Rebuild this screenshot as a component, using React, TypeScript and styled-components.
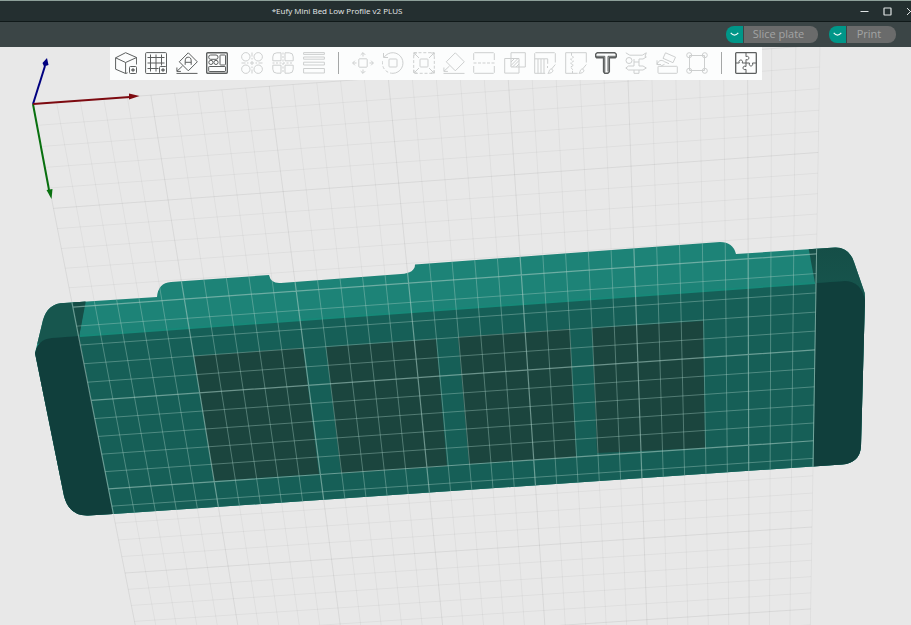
import React from "react";
import styled, { createGlobalStyle } from "styled-components";

const GlobalStyle = createGlobalStyle`
  * { box-sizing: border-box; }
  body { margin: 0; background: #e8e8e8; font-family: "Open Sans", "Noto Sans", sans-serif; }
`;

const Page = styled.div`
  display: flex;
  flex-direction: column;
  height: 100vh;
  overflow: hidden;
`;

const TitleBar = styled.header`
  display: flex;
  align-items: center;
  justify-content: space-between;
  flex: none;
  height: 22px;
  background: #242f30;
  border-top: 1px solid #8da099;
  border-bottom: 1px solid #101919;
  overflow: hidden;
`;

const Title = styled.h1`
  flex: 0 0 74%;
  margin: 0;
  color: #e6eaea;
  font: 400 8px/20px "Open Sans", sans-serif;
  text-align: center;
  white-space: nowrap;
`;

const WindowButtons = styled.div`
  display: flex;
  margin-right: -11px;
`;

const WindowButton = styled.button`
  display: grid;
  place-items: center;
  width: 23px;
  height: 20px;
  padding: 0;
  border: 0;
  background: none;
  color: #dfe4e4;
`;

const ActionBar = styled.div`
  display: flex;
  align-items: center;
  justify-content: flex-end;
  gap: 11px;
  flex: none;
  height: 25px;
  padding-right: 15px;
  background: #3b4546;
`;

const SplitButton = styled.div`
  display: flex;
  gap: 1px;
  height: 17px;
`;

const Caret = styled.button`
  display: grid;
  place-items: center;
  width: 17px;
  padding: 0;
  border: 0;
  border-radius: 8px 0 0 8px;
  background: #009688;
  color: #eefaf8;
`;

const Action = styled.button<{ $width: number }>`
  width: ${(p) => p.$width}px;
  padding: 0 5px 1px 0;
  border: 0;
  border-radius: 0 8px 8px 0;
  background: #6a6b6b;
  color: #a3a4a4;
  font: 400 11px/16px "Open Sans", sans-serif;
  text-align: center;
`;

const Viewport = styled.main`
  display: grid;
  grid-template: minmax(0, 1fr) / minmax(0, 1fr);
  flex: 1;
  min-height: 0;
  background: #e8e8e8;
`;

const Scene = styled.svg`
  grid-area: 1 / 1;
  width: 100%;
  height: 100%;
  display: block;
`;

const Toolbar = styled.nav`
  grid-area: 1 / 1;
  z-index: 1;
  align-self: start;
  justify-self: start;
  display: flex;
  align-items: center;
  gap: 13px;
  margin-left: 110px;
  padding: 5px 5px 6px;
  background: #fcfdfd;
`;

const ToolGroup = styled.div<{ $width: number }>`
  display: flex;
  justify-content: space-between;
  width: ${(p) => p.$width}px;
`;

const Tool = styled.button`
  width: 22px;
  height: 22px;
  padding: 0;
  border: 0;
  background: none;
  color: #5c5f5f;
  &:disabled { color: #cdcfcf; }
  svg { display: block; }
`;

const Divider = styled.span`
  width: 1px;
  height: 22px;
  background: #a5a7a7;
`;

/* ---------- toolbar icons, 22 x 22 ---------- */

const PlusBox = () => (
  <>
    <rect x="14.5" y="14.5" width="7" height="7" rx="1" fill="#fcfdfd" />
    <path d="M18 16.2v3.6M16.2 18h3.6" strokeWidth="1.3" />
  </>
);
const Brush = () => (
  <path d="M21.3 12.5L17.6 17M18.4 17.6c1.4 1.6-.6 3.9-4.6 3.7 1.6-.8 1-2.3 2-3.5.8-.9 1.9-.9 2.6-.2z" />
);

const icons: Record<string, React.ReactNode> = {
  "Add model": (
    <>
      <path d="M.6 5.8L10.6.7l11 4.8v7M.6 5.8v11.4l10 4.3V10.5L.6 5.8M10.6 10.5l11-5M10.6 21.5l2-.7" />
      <PlusBox />
    </>
  ),
  "Add plate": (
    <>
      <rect x=".6" y=".6" width="20.9" height="20.9" rx="1" />
      <path d="M5.5 2.5v17M11 2.5v17M16.5 2.5v11M2.5 5.5h17M2.5 11h17M2.5 16.5h11" />
      <PlusBox />
    </>
  ),
  "Auto orient": (
    <>
      <path d="M12.3.8l9 9-9 9-9-9z" />
      <path d="M9.2 12.8V9c0-2.8 1.2-3.8 3-3.8s3 1 3 3.8v3.8M9.2 10.3h6" />
      <path d="M6.5 14L.9 19.3M.9 15.5v3.9h4M.5 21.4h21" />
    </>
  ),
  Arrange: (
    <>
      <rect x=".7" y=".7" width="20.6" height="20.6" rx="1" strokeWidth="1.4" />
      <rect x="2.7" y="3" width="9.3" height="4.3" rx="2" />
      <rect x="14" y="3" width="5.5" height="10" rx=".6" />
      <circle cx="4.9" cy="10.4" r="2.1" />
      <circle cx="10" cy="10.4" r="2.1" />
      <rect x="2.7" y="14.5" width="16.8" height="5" rx=".6" />
    </>
  ),
  "Split to objects": (
    <>
      <circle cx="4.8" cy="4.8" r="4.2" />
      <circle cx="17.2" cy="4.8" r="4.2" />
      <circle cx="4.8" cy="17.2" r="4.2" />
      <circle cx="17.2" cy="17.2" r="4.2" />
      <path d="M11 .5v21M.5 11h21" strokeDasharray="4 1.5 1.5 1.5" />
    </>
  ),
  "Split to parts": (
    <>
      <path d="M9 8.800V.8H4.800a4 4 0 00-4 4v4zM13 8.800V.8h4.200a4 4 0 014 4v4zM9 13.200v8H4.800a4 4 0 01-4-4v-4zM13 13.200v8h4.200a4 4 0 004-4v-4z" />
      <path d="M11 .5v21M.5 11h21" strokeDasharray="2 1.5" />
    </>
  ),
  "Layer height": (
    <>
      <rect x=".6" y=".6" width="20.8" height="1.8" />
      <rect x=".6" y="5" width="20.8" height="2.2" />
      <rect x=".6" y="10.2" width="20.8" height="2.8" />
      <rect x=".6" y="16.5" width="20.8" height="4.5" />
    </>
  ),
  Move: (
    <>
      <rect x="6.8" y="6.8" width="8.4" height="8.4" rx=".8" />
      <path d="M11 4.5V.8M8.7 2.9L11 .6l2.3 2.3M11 17.5v3.7M8.7 19.1l2.3 2.3 2.3-2.3M4.5 11H.8M2.9 8.7L.6 11l2.3 2.3M17.5 11h3.7M19.1 8.7l2.3 2.3-2.3 2.3" />
    </>
  ),
  Rotate: (
    <>
      <rect x="7" y="7" width="8" height="8" rx=".8" />
      <path d="M2.3 5A10.3 10.3 0 1111 21.3" />
      <path d="M11 21.3A10.3 10.3 0 01.8 8" strokeDasharray="3 2" />
      <path d="M1.5 1v4.500H6" />
    </>
  ),
  Scale: (
    <>
      <rect x=".7" y=".7" width="20.6" height="20.6" strokeDasharray="3 1.8" />
      <rect x="7" y="7" width="8" height="8" rx=".8" />
      <path d="M6 6L1 1M16 6l5-5M6 16l-5 5M16 16l5 5M1 4V1h3M18 1h3v3M1 18v3h3M21 18v3h-3" />
    </>
  ),
  "Place on face": (
    <path d="M12.3.8l9 9-9 9-9-9zM6.5 14L.9 19.3M.9 15.5v3.9h4M.5 21.4h21" />
  ),
  Cut: (
    <>
      <path d="M.7 8V1.500l.8-.8h19l.8.8V8M.7 14v6.500l.8.8h19l.8-.8V14" />
      <path d="M.5 11h21" strokeDasharray="3 1.5" />
    </>
  ),
  "Mesh boolean": (
    <>
      <rect x="7" y=".7" width="14.3" height="14.3" />
      <rect x=".7" y="6.5" width="14.3" height="14.6" />
      <path d="M7 10l3.500-3.500M7 13.500l7-7M8.500 15L15 8.500M12 15l3-3" />
    </>
  ),
  "Support painting": (
    <>
      <path d="M21.3 10.500V1.500l-.8-.8h-19l-.8.8v19.8M.7 6.800h13v5M4 7v14.300M7 7v14.300M10 7v14.300M13.500 14v2M.7 21.300h10.500" />
      <Brush />
    </>
  ),
  "Seam painting": (
    <>
      <path d="M21.3 10.500V.7H.7v20.600h12" />
      <path d="M6.5.7v3l2 1.500-3 2 3 2-3 2 3 2-3 2 2 2v4" strokeDasharray="3 1" />
      <Brush />
    </>
  ),
  "Text shape": (
    <>
      <path d="M2.2.8h17.600l1.500 1.500v2.500l-1 1h-6v14l-1.500 1.500H9.800l-1.200-1.500v-14h-7l-1-1.200V2.300z" strokeWidth="1.5" />
      <path d="M1 4.300h8.800v16M13 19.500V4.300h8" strokeWidth="1" />
    </>
  ),
  Measure: (
    <>
      <path d="M.8.8l4 2.400h12.500l4-2.400L20 4.500 21.300 5 18 7h-4v7h4l3.300 2-3.300 2h-4v3.300H9V18H3.500L.8 16l2.700-2H9V7" />
      <circle cx="4" cy="8.500" r="3" />
      <path d="M9 10h5M9 18h5" />
    </>
  ),
  "Assembly view": (
    <>
      <rect x="2" y="14.3" width="19.3" height="7" rx=".6" />
      <path d="M9.5.8l10 4.400-2.500 5.500-10-4.400zM1 8.300v4.200h4M1 12.500c1.200-4 4.500-5.300 7.500-2.800l4.500 2M4.500 14.300l4-2" />
    </>
  ),
  "Fit to corners": (
    <>
      <rect x="3.5" y="3.5" width="15" height="15" />
      <circle cx="3.2" cy="3.2" r="2.5" />
      <circle cx="18.8" cy="3.2" r="2.5" />
      <circle cx="3.2" cy="18.8" r="2.5" />
      <circle cx="18.8" cy="18.8" r="2.5" />
    </>
  ),
  Assemble: (
    <>
      <rect x=".7" y=".7" width="20.6" height="20.6" rx=".8" strokeWidth="1.3" />
      <path d="M11 .7v4c3.800-2 3.800 4.500 0 2.800V11M.7 11h3.500c-1.500-4 4.800-4 3 0H14.500c-1.500 4 4.500 4 3 0h3.800M11 11v3.500c-4-1.800-4 4.500 0 2.800v4" />
    </>
  ),
};

const ToolButton = ({ name, disabled }: { name: string; disabled?: boolean }) => (
  <Tool type="button" aria-label={name} disabled={disabled}>
    <svg width="22" height="22" viewBox="0 0 22 22" fill="none" stroke="currentColor" strokeWidth="1" strokeLinejoin="round">
      {icons[name]}
    </svg>
  </Tool>
);

const editTools = [
  "Move", "Rotate", "Scale", "Place on face", "Cut", "Mesh boolean",
  "Support painting", "Seam painting", "Text shape", "Measure", "Assembly view", "Fit to corners",
];

/* ---------- build plate grid in perspective ---------- */

type Point = [number, number];
const COLS = 33;
const ROWS = 25;
const LAST_ROW = 32;
const corners: Point[] = [[33, 104], [820, 45], [812, 527], [125, 573]];

function makeProjection([p0, p1, p2, p3]: Point[]) {
  const dx1 = p1[0] - p2[0], dx2 = p3[0] - p2[0], sx = p0[0] - p1[0] + p2[0] - p3[0];
  const dy1 = p1[1] - p2[1], dy2 = p3[1] - p2[1], sy = p0[1] - p1[1] + p2[1] - p3[1];
  const det = dx1 * dy2 - dx2 * dy1;
  const g = (sx * dy2 - dx2 * sy) / det;
  const h = (dx1 * sy - sx * dy1) / det;
  const a = p1[0] - p0[0] + g * p1[0], b = p3[0] - p0[0] + h * p3[0];
  const d = p1[1] - p0[1] + g * p1[1], e = p3[1] - p0[1] + h * p3[1];
  return (col: number, row: number) => {
    const u = col / COLS, v = row / ROWS, w = g * u + h * v + 1;
    return `${((a * u + b * v + p0[0]) / w).toFixed(2)} ${((d * u + e * v + p0[1]) / w).toFixed(2)}`;
  };
}

const project = makeProjection(corners);
const columnLine = (c: number) => `M${project(c, 0)}L${project(c, LAST_ROW)}`;
const rowLine = (r: number) => `M${project(0, r)}L${project(COLS, r)}`;
const pick = (major: boolean) => {
  let d = "";
  for (let c = 0; c <= COLS; c++) if ((c % 5 === 0) === major) d += columnLine(c);
  for (let r = 0; r <= LAST_ROW; r++) if ((r % 5 === 0) === major) d += rowLine(r);
  return d;
};
const minorLines = pick(false);
const majorLines = pick(true);

const silhouette =
  "M35 353L43 320Q48 303 64 303L157 297Q158 283 171 282L269 275Q271 284 281 283L401 274Q415 273 415 264.5L720 242Q733 242 736 254L835 247.5Q849 247 854 262L863 288Q865 292 865 298L861 446Q860 463 842 464.5L113 514L88 515.5Q69 516 64 496Z";

const pockets = [
  "194,356 303,348 319,474 214,481",
  "326,347 436,339 447,466 341,473",
  "458,337 570,329 576,457 469,464",
  "592,328 703,321 705,448 597,453",
];

const SceneView = () => (
  <Scene viewBox="0 47 911 578" preserveAspectRatio="xMinYMin slice" role="img" aria-label="3D model on the build plate">
    <defs>
      <clipPath id="model"><path d={silhouette} /></clipPath>
      <linearGradient id="sideTop" x1="0" y1="0" x2="0" y2="1">
        <stop offset="0" stopColor="#154d46" />
        <stop offset="1" stopColor="#17574f" />
      </linearGradient>
    </defs>
    <g fill="none" stroke="#000">
      <path d={minorLines} strokeOpacity=".04" />
      <path d={majorLines} strokeOpacity=".065" />
    </g>
    <g clipPath="url(#model)">
      <rect x="30" y="235" width="840" height="285" fill="#1d8377" />
      <path d="M30 290H87L79 337L30 345Z" fill="#17564e" />
      <path d="M72 295H87L79 337Z" fill="#164d46" />
      <path d="M807 240H870V310L815 283Z" fill="url(#sideTop)" />
      <path d="M30 370L35 353Q38 339 52 338L80 336L815 283L845 281Q861 281 865 300V520H30Z" fill="#165f57" />
      <path d="M30 370L35 353Q38 339 52 338L79 336L114 520H30Z" fill="#103f3c" />
      <path d="M816 283L845 281Q861 281 865 300L870 520H813Z" fill="#103f3c" />
      <path d="M80 336L815 283" stroke="#178878" strokeWidth="2" />
      {pockets.map((p) => <polygon key={p} points={p} fill="#1b453e" />)}
      <g fill="none" stroke="#a5ccc2">
        <path d={minorLines} strokeOpacity=".4" />
        <path d={majorLines} strokeOpacity=".58" strokeWidth="1.2" />
        <path d={columnLine(COLS)} strokeOpacity=".4" />
      </g>
    </g>
    <g strokeWidth="2">
      <path d="M33 104L45 66" stroke="#000080" />
      <path d="M47 58L42.5 63L44 66.5L48.5 65Z" fill="#000080" stroke="none" />
      <path d="M33 104L49 190" stroke="#08700e" />
      <path d="M51.5 199L46.5 190L52.5 189Z" fill="#08700e" stroke="none" />
      <path d="M33 104L130 97" stroke="#7d0a10" />
      <path d="M139.5 96L129 93.5V99.5Z" fill="#7d0a10" stroke="none" />
    </g>
  </Scene>
);

const CaretIcon = () => (
  <svg width="9" height="5" viewBox="0 0 9 5" fill="none" stroke="currentColor" strokeWidth="1.2">
    <path d="M.7.9Q4.5 5.3 8.3.9" />
  </svg>
);

export default function App() {
  return (
    <Page>
      <GlobalStyle />
      <TitleBar>
        <Title>*Eufy Mini Bed Low Profile v2 PLUS</Title>
        <WindowButtons>
          <WindowButton type="button" aria-label="Minimize">
            <svg width="9" height="9" viewBox="0 0 9 9" stroke="currentColor"><path d="M.5 4.5h8" /></svg>
          </WindowButton>
          <WindowButton type="button" aria-label="Maximize">
            <svg width="9" height="9" viewBox="0 0 9 9" fill="none" stroke="currentColor"><rect x="1" y="1" width="7" height="7" rx=".5" strokeWidth="1.2" /></svg>
          </WindowButton>
          <WindowButton type="button" aria-label="Close">
            <svg width="9" height="9" viewBox="0 0 9 9" stroke="currentColor"><path d="M1 1l7 7M8 1L1 8" /></svg>
          </WindowButton>
        </WindowButtons>
      </TitleBar>
      <ActionBar>
        <SplitButton>
          <Caret type="button" aria-label="Slice options"><CaretIcon /></Caret>
          <Action type="button" disabled $width={74}>Slice plate</Action>
        </SplitButton>
        <SplitButton>
          <Caret type="button" aria-label="Print options"><CaretIcon /></Caret>
          <Action type="button" disabled $width={49}>Print</Action>
        </SplitButton>
      </ActionBar>
      <Viewport>
        <SceneView />
        <Toolbar aria-label="Tools">
          <ToolGroup $width={113}>
            {["Add model", "Add plate", "Auto orient", "Arrange"].map((n) => <ToolButton key={n} name={n} />)}
          </ToolGroup>
          <ToolGroup $width={84}>
            {["Split to objects", "Split to parts", "Layer height"].map((n) => <ToolButton key={n} name={n} disabled />)}
          </ToolGroup>
          <Divider />
          <ToolGroup $width={356}>
            {editTools.map((n) => <ToolButton key={n} name={n} disabled={n !== "Text shape"} />)}
          </ToolGroup>
          <Divider />
          <ToolButton name="Assemble" />
        </Toolbar>
      </Viewport>
    </Page>
  );
}
